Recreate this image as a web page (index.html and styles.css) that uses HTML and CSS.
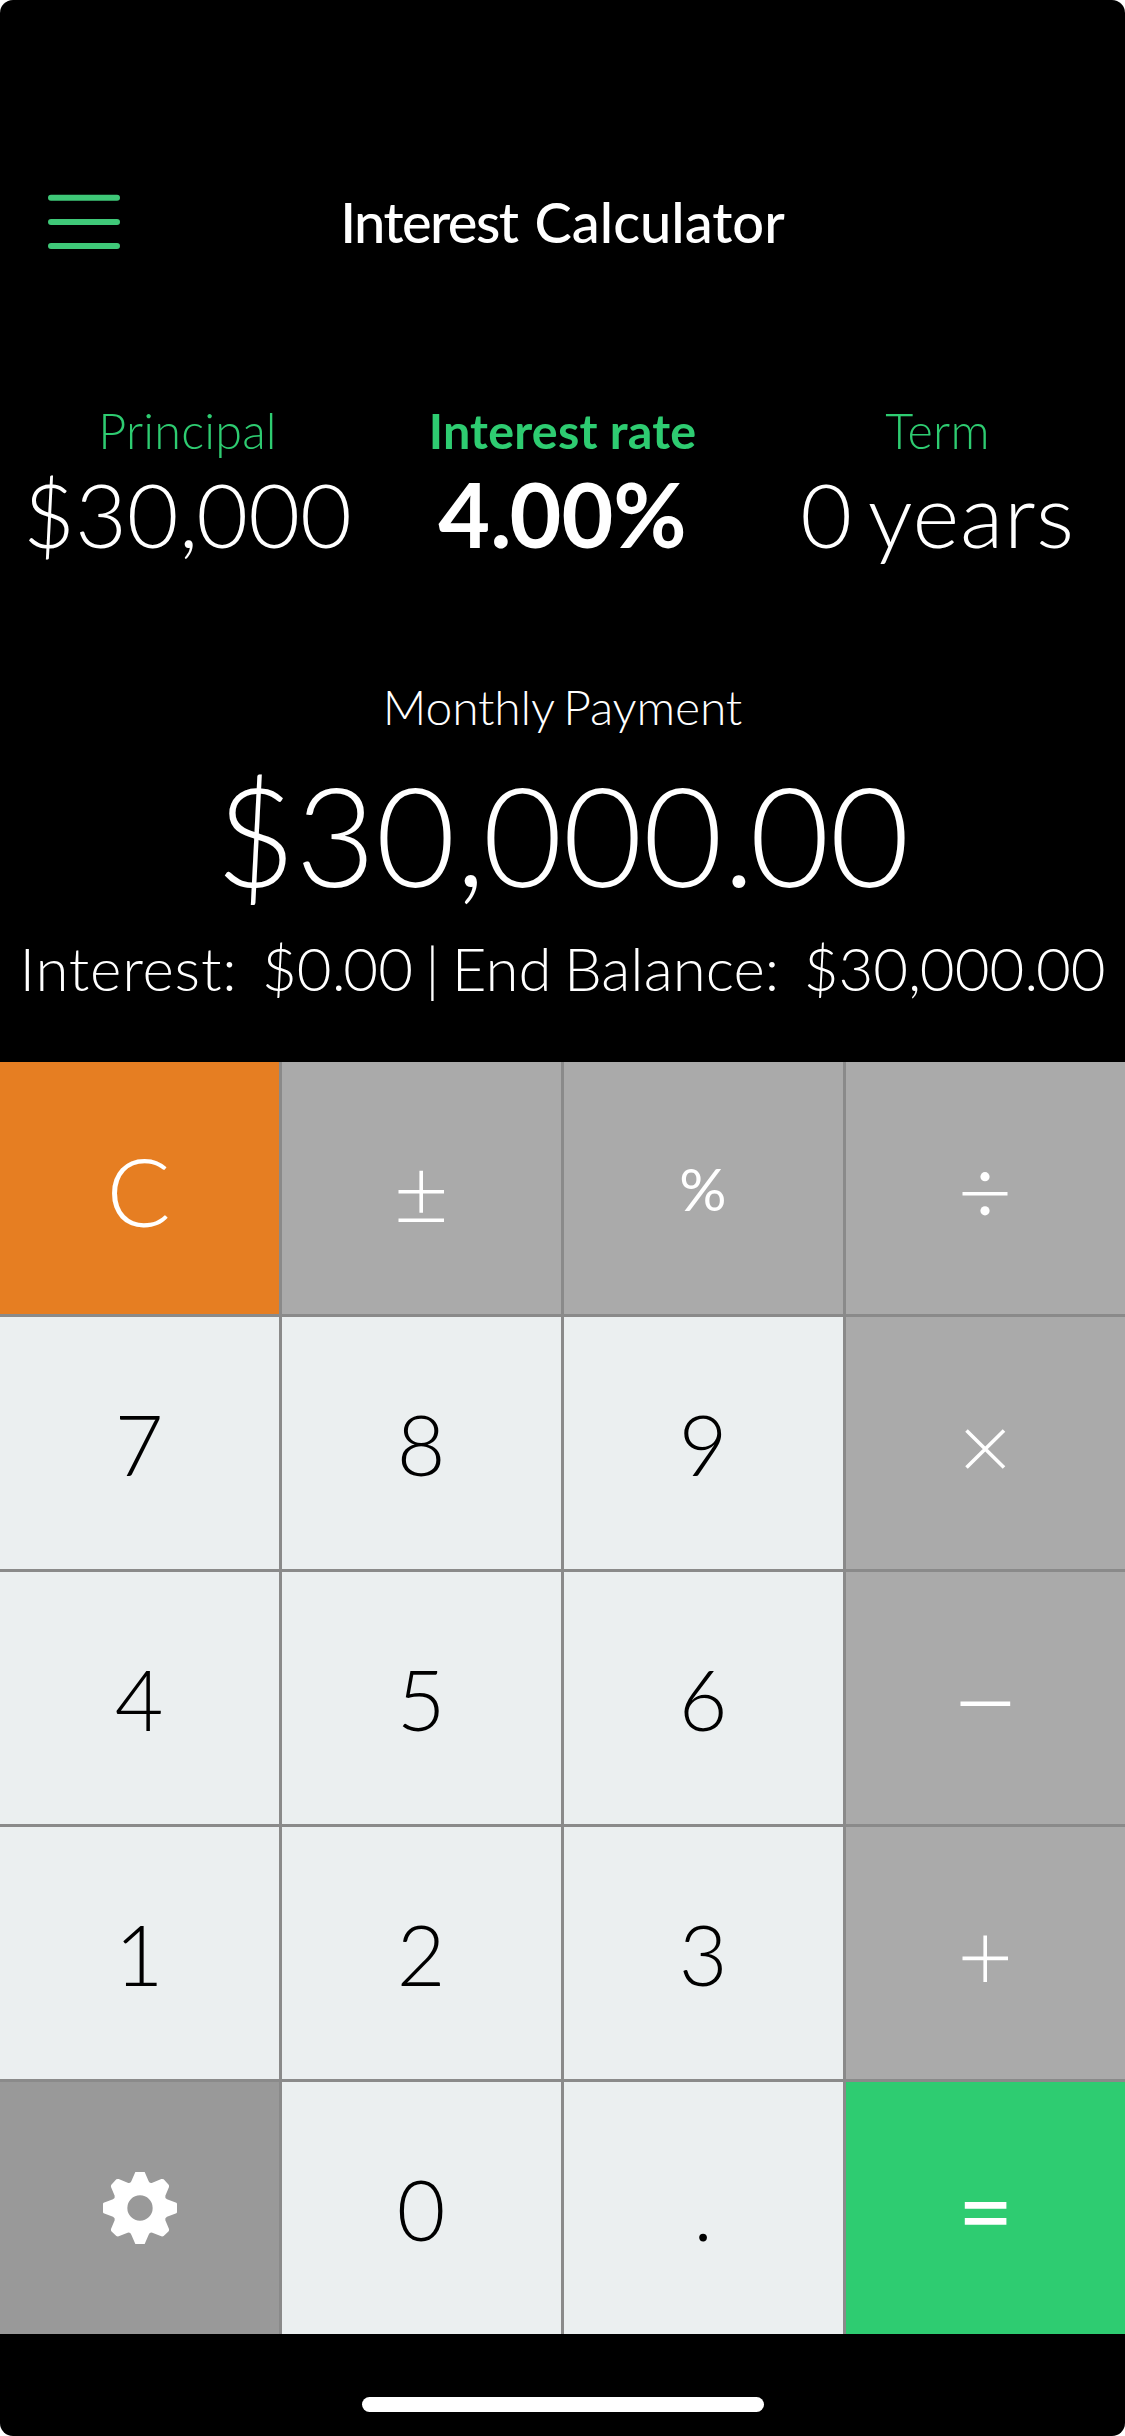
FILE: index.html
```html
<!DOCTYPE html>
<html lang="en">
<head>
<meta charset="utf-8">
<title>Interest Calculator</title>
<link rel="stylesheet" href="styles.css">
</head>
<body>
<div class="app">
  <header class="header">
    <svg class="menu" viewBox="0 0 72 56"><path d="M3 3.8H69M3 28H69M3 52H69"/></svg>
    <h1 class="title"><span class="tight">Interest</span> Calculator</h1>
  </header>
  <section class="inputs">
    <div class="field"><div class="label">Principal</div><div class="value">$30<span class="comma">,</span>000</div></div>
    <div class="field active"><div class="label">Interest rate</div><div class="value">4<span class="comma">.</span>00%</div></div>
    <div class="field"><div class="label">Term</div><div class="value term">0 years</div></div>
  </section>
  <section class="result">
    <div class="caption">Monthly Payment</div>
    <div class="amount">$30<span class="comma">,</span>000<span class="point">.</span>00</div>
    <div class="summary"><span class="loose">Interest:</span>&nbsp; $0<span class="point">.</span>00 | End Balance:&nbsp; $30<span class="comma">,</span>000<span class="point">.</span>00</div>
  </section>
  <main class="keypad">
    <button class="key clear"><span>C</span></button>
    <button class="key op"><svg viewBox="0 0 60 60"><path d="M7.5 33.8H53M30.2 12.7V54.7M7.5 62.3H53"/></svg></button>
    <button class="key op percent"><span>%</span></button>
    <button class="key op"><svg viewBox="0 0 60 60"><path d="M7.5 35.7H52.5"/><circle cx="30" cy="18.7" r="4.6"/><circle cx="30" cy="52.8" r="4.6"/></svg></button>

    <button class="key"><span>7</span></button>
    <button class="key"><span>8</span></button>
    <button class="key"><span>9</span></button>
    <button class="key op"><svg viewBox="0 0 60 60"><path d="M11.5 17.5L49 54.5M49 17.5L11.5 54.5"/></svg></button>

    <button class="key"><span>4</span></button>
    <button class="key"><span>5</span></button>
    <button class="key"><span>6</span></button>
    <button class="key op minus"><svg viewBox="0 0 60 60"><path d="M5.5 35.7H55.2"/></svg></button>

    <button class="key"><span>1</span></button>
    <button class="key"><span>2</span></button>
    <button class="key"><span>3</span></button>
    <button class="key op"><svg viewBox="0 0 60 60"><path d="M7.5 35.4H53M30.2 12.5V59"/></svg></button>

    <button class="key settings"><svg class="gear" viewBox="-111 -111 222 222"><path fill-rule="evenodd" d="M-14 -108H14L26 -80Q29 -73 37 -76L64 -87Q68 -88 71 -86L86 -70Q88 -67 87 -63L76 -37Q74 -30 81 -26L109 -16Q111 -15 111 -12V12Q111 15 109 16L81 26Q74 30 76 37L87 63Q88 67 86 70L71 84Q68 86 64 85L37 74Q29 72 26 80L14 108H-14L-26 80Q-29 72 -37 74L-64 85Q-68 86 -71 84L-86 70Q-88 67 -87 63L-76 37Q-74 30 -81 26L-109 16Q-111 15 -111 12V-12Q-111 -15 -109 -16L-81 -26Q-74 -30 -76 -37L-87 -63Q-88 -67 -86 -70L-71 -86Q-68 -88 -64 -87L-37 -76Q-29 -73 -26 -80ZM38 0A38 38 0 1 0 -38 0A38 38 0 1 0 38 0Z"/></svg></button>
    <button class="key"><span>0</span></button>
    <button class="key"><span>.</span></button>
    <button class="key equals"><svg viewBox="0 0 60 60"><path d="M9.8 27.3H51.4M9.8 43.4H51.4"/></svg></button>
  </main>
  <footer class="footer"><div class="home"></div></footer>
</div>
</body>
</html>
```
FILE: styles.css
```css
* { box-sizing: border-box; }
body { margin: 0; background: #fff; font-family: Lato, sans-serif; }
.app {
  width: 1125px; height: 2436px; overflow: hidden;
  display: flex; flex-direction: column;
  background: #000; color: #fff; font-weight: 300; border-radius: 13px;
}

.header {
  height: 400px; padding-top: 194px;
  display: grid; grid-template-columns: 168px 1fr 168px; align-items: start;
}
.menu { width: 72px; height: 56px; margin-left: 48px; }
.menu path { stroke: #3fc878; stroke-width: 6; stroke-linecap: round; }
.title {
  margin: 0; text-align: center; white-space: nowrap;
  font: 500 56px/56px "Futura", Lato, sans-serif; word-spacing: 3px;
}
.tight { letter-spacing: -1.6px; }

.inputs { height: 268px; display: grid; grid-template-columns: repeat(3, 1fr); text-align: center; }
.label { font-size: 48.5px; line-height: 60px; letter-spacing: .2px; color: #2ecc71; }
.value { font-size: 89.5px; line-height: 108px; white-space: nowrap; }
.term { letter-spacing: .8px; word-spacing: -8px; }
.active { font-weight: 700; }
.comma { letter-spacing: -.023em; }
.point { letter-spacing: -.039em; }

.result { height: 394px; text-align: center; white-space: nowrap; }
.caption { font-size: 48px; line-height: 77px; letter-spacing: -.15px; word-spacing: -3.5px; }
.amount { margin-top: 3px; font-size: 138px; line-height: 172px; }
.summary { margin-top: 10px; font-size: 60px; line-height: 76px; word-spacing: -4px; }
.loose { letter-spacing: .8px; }

.keypad {
  height: 1272px; display: grid; gap: 3px; background: #8a8a8a;
  grid-template-columns: repeat(4, 1fr); grid-template-rows: repeat(5, 1fr);
}
.key {
  display: flex; align-items: center; justify-content: center;
  border: 0; padding: 2px 1px 0 0; background: #ebeff0; color: #000;
  font: 300 84px/106px Lato, sans-serif;
}
.key svg { width: 60px; height: 60px; margin: -2px 1px 0 0; overflow: visible; fill: #fff; }
.key path { stroke: #fff; stroke-width: 3.6; }
.clear { padding: 3px 2px 0 0; background: #e67e22; color: #fff; font-size: 95px; }
.op { background: #aaa; color: #fff; }
.percent { padding-top: 2px; font-size: 59px; font-weight: 400; }
.minus path { stroke-width: 4.4; }
.settings { background: #999; }
.key .gear { width: 74px; height: 74px; margin: -2px 0 0 2px; }
.gear path { stroke: none; }
.equals { background: #2ecc71; }
.equals path { stroke-width: 6.8; }

.footer { height: 102px; padding-top: 63px; }
.home { width: 402px; height: 15px; margin: auto; border-radius: 8px; background: #fff; }
```
